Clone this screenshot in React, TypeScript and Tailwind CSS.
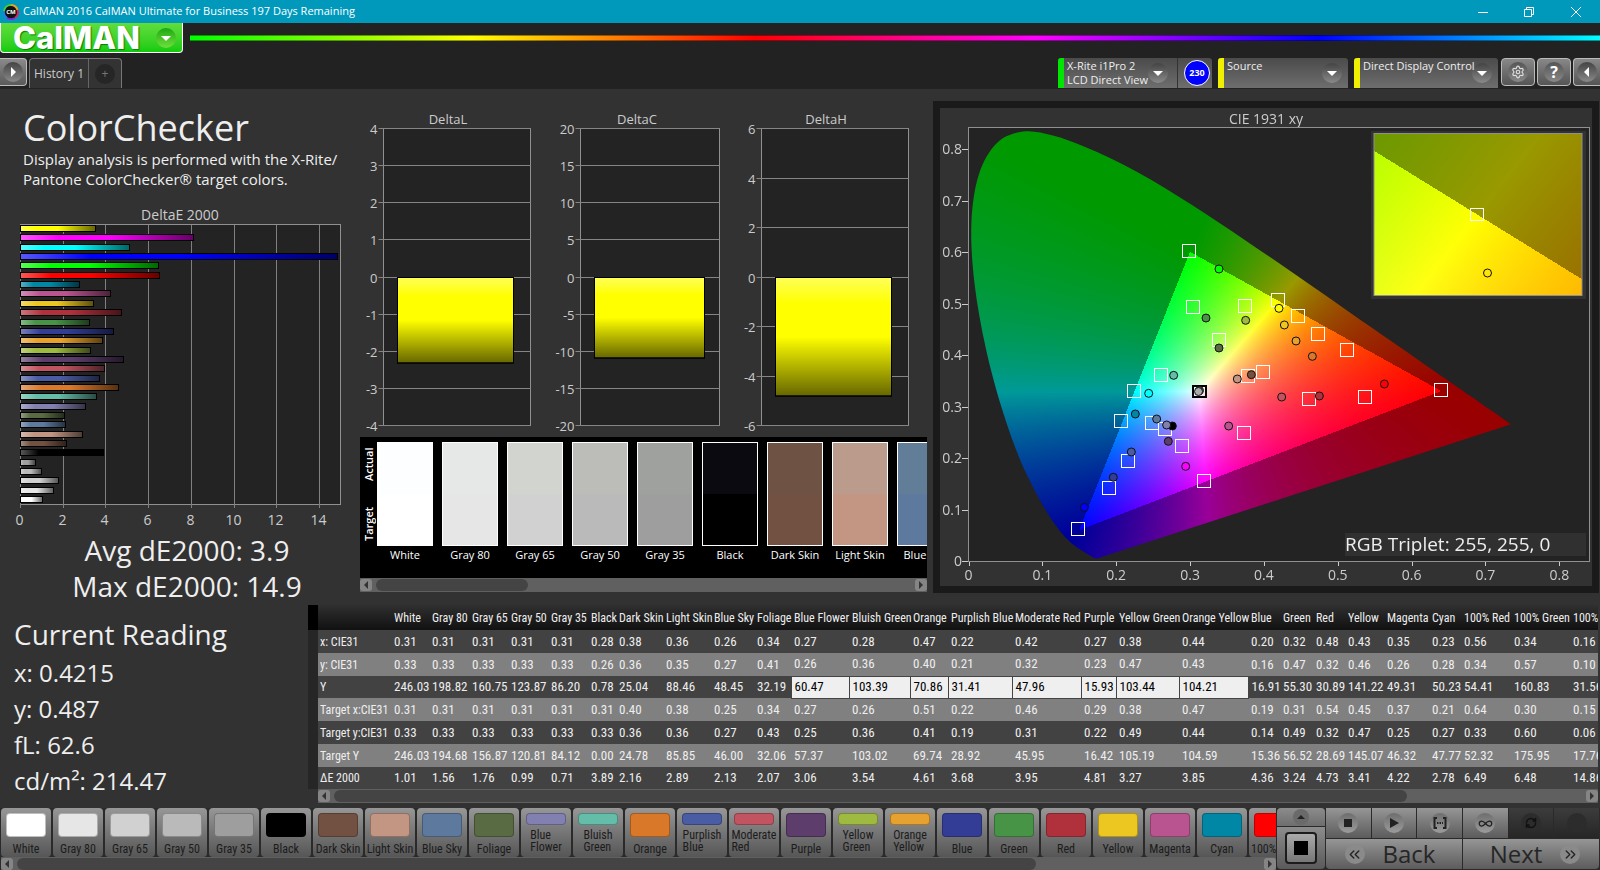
import React, { useLayoutEffect, useRef } from 'react';
import { ChevronsLeft, ChevronsRight, Settings, RefreshCw, Infinity as InfinityIcon } from 'lucide-react';

interface Patch {
  name: string;
  color: string;
  actual?: string;
  width: number;
  values: string[];
}

const ROW_LABELS = ['x: CIE31', 'y: CIE31', 'Y', 'Target x:CIE31', 'Target y:CIE31', 'Target Y', 'ΔE 2000'];

const PATCHES: Patch[] = [
  { name: 'White', color: '#ffffff', actual: '#fdfeff', width: 38, values: ['0.31', '0.33', '246.03', '0.31', '0.33', '246.03', '1.01'] },
  { name: 'Gray 80', color: '#e6e6e6', actual: '#e5e8e6', width: 40, values: ['0.31', '0.33', '198.82', '0.31', '0.33', '194.68', '1.56'] },
  { name: 'Gray 65', color: '#d1d1d1', actual: '#d2d4d0', width: 39, values: ['0.31', '0.33', '160.75', '0.31', '0.33', '156.87', '1.76'] },
  { name: 'Gray 50', color: '#bababa', actual: '#bcbcb9', width: 40, values: ['0.31', '0.33', '123.87', '0.31', '0.33', '120.81', '0.99'] },
  { name: 'Gray 35', color: '#9e9e9e', actual: '#9fa19f', width: 40, values: ['0.31', '0.33', '86.20', '0.31', '0.33', '84.12', '0.71'] },
  { name: 'Black', color: '#000000', actual: '#0a0a10', width: 28, values: ['0.28', '0.26', '0.78', '0.31', '0.33', '0.00', '3.89'] },
  { name: 'Dark Skin', color: '#735142', actual: '#6e5345', width: 47, values: ['0.38', '0.36', '25.04', '0.40', '0.36', '24.78', '2.16'] },
  { name: 'Light Skin', color: '#c29682', actual: '#bb9b8b', width: 48, values: ['0.36', '0.35', '88.46', '0.38', '0.36', '85.85', '2.89'] },
  { name: 'Blue Sky', color: '#5d7a9e', actual: '#627d97', width: 43, values: ['0.26', '0.27', '48.45', '0.25', '0.27', '46.00', '2.13'] },
  { name: 'Foliage', color: '#596b42', width: 37, values: ['0.34', '0.41', '32.19', '0.34', '0.43', '32.06', '2.07'] },
  { name: 'Blue Flower', color: '#8280b0', width: 58, values: ['0.27', '0.26', '60.47', '0.27', '0.25', '57.37', '3.06'] },
  { name: 'Bluish Green', color: '#63bda8', width: 61, values: ['0.28', '0.36', '103.39', '0.26', '0.36', '103.02', '3.54'] },
  { name: 'Orange', color: '#d97829', width: 38, values: ['0.47', '0.40', '70.86', '0.51', '0.41', '69.74', '4.61'] },
  { name: 'Purplish Blue', color: '#4a5ca3', width: 64, values: ['0.22', '0.21', '31.41', '0.22', '0.19', '28.92', '3.68'] },
  { name: 'Moderate Red', color: '#c25461', width: 69, values: ['0.42', '0.32', '47.96', '0.46', '0.31', '45.95', '3.95'] },
  { name: 'Purple', color: '#5c3d6b', width: 35, values: ['0.27', '0.23', '15.93', '0.29', '0.22', '16.42', '4.81'] },
  { name: 'Yellow Green', color: '#9eba40', width: 63, values: ['0.38', '0.47', '103.44', '0.38', '0.49', '105.19', '3.27'] },
  { name: 'Orange Yellow', color: '#e6a12e', width: 69, values: ['0.44', '0.43', '104.21', '0.47', '0.44', '104.59', '3.85'] },
  { name: 'Blue', color: '#333d96', width: 32, values: ['0.20', '0.16', '16.91', '0.19', '0.14', '15.36', '4.36'] },
  { name: 'Green', color: '#479447', width: 33, values: ['0.32', '0.47', '55.30', '0.31', '0.49', '56.52', '3.24'] },
  { name: 'Red', color: '#b0303b', width: 32, values: ['0.48', '0.32', '30.89', '0.54', '0.32', '28.69', '4.73'] },
  { name: 'Yellow', color: '#edc721', width: 39, values: ['0.43', '0.46', '141.22', '0.45', '0.47', '145.07', '3.41'] },
  { name: 'Magenta', color: '#ba5491', width: 45, values: ['0.35', '0.26', '49.31', '0.37', '0.25', '46.32', '4.22'] },
  { name: 'Cyan', color: '#0087a6', width: 32, values: ['0.23', '0.28', '50.23', '0.21', '0.27', '47.77', '2.78'] },
  { name: '100% Red', color: '#ff0000', width: 50, values: ['0.56', '0.34', '54.41', '0.64', '0.33', '52.32', '6.49'] },
  { name: '100% Green', color: '#00ff00', width: 59, values: ['0.34', '0.57', '160.83', '0.30', '0.60', '175.95', '6.48'] },
  { name: '100% Blue', color: '#0000ff', width: 60, values: ['0.16', '0.10', '31.56', '0.15', '0.06', '17.76', '14.86'] },
];

const TWO_LINE = ['Blue Flower', 'Bluish Green', 'Purplish Blue', 'Moderate Red', 'Yellow Green', 'Orange Yellow'];

// bottom to top
const DELTA_E = [
  ...PATCHES.map(p => ({ color: p.color, value: Number(p.values[6]) })),
  { color: '#00ffff', value: 5.1 },
  { color: '#ff00ff', value: 8.1 },
  { color: '#ffff00', value: 3.5 },
].reverse();

/* ---------- header ---------- */

const ArrowDot: React.FC<{ dir: 'down' | 'left' | 'right' | 'up'; green?: boolean }> = ({ dir, green }) => {
  const points = { down: '5,8 15,8 10,13', left: '12,5 12,15 7,10', right: '8,5 8,15 13,10', up: '5,12 15,12 10,7' }[dir];
  return (
    <span className={`flex size-5 shrink-0 items-center justify-center rounded-full ${green ? 'bg-linear-to-b from-[#12a812] to-[#6de03c]' : 'bg-linear-to-b from-[#444] to-[#8a8a8a]'}`}>
      <svg viewBox="0 0 20 20" className="size-5" fill="#fff"><polygon points={points} /></svg>
    </span>
  );
};

const TitleBar: React.FC = () => (
  <div className="flex h-[23px] items-center bg-[#0099bc] pl-[3px] text-white">
    <svg viewBox="0 0 16 16" className="size-4">
      <circle cx="8" cy="8" r="7" fill="#111" />
      <g fill="none" strokeWidth="2">
        <path d="M8 1A7 7 0 0 1 14.5 6" stroke="#f0a020" />
        <path d="M14.5 6A7 7 0 0 1 12 14" stroke="#e02060" />
        <path d="M12 14A7 7 0 0 1 4 14" stroke="#8030e0" />
        <path d="M4 14A7 7 0 0 1 1 7" stroke="#2080f0" />
        <path d="M1 7A7 7 0 0 1 8 1" stroke="#40d040" />
      </g>
      <text x="8" y="10" textAnchor="middle" fontSize="6" fontWeight="700" fill="#fff" className="font-['Open_Sans',sans-serif]">CM</text>
    </svg>
    <span className="ml-1 text-[11px]">CalMAN 2016 CalMAN Ultimate for Business 197 Days Remaining</span>
    <div className="ml-auto flex">
      <button aria-label="Minimize" className="flex h-[23px] w-[46px] items-center justify-center">
        <svg viewBox="0 0 12 12" className="size-3" stroke="#fff"><path d="M1 6.5H11" /></svg>
      </button>
      <button aria-label="Restore" className="flex h-[23px] w-[46px] items-center justify-center">
        <svg viewBox="0 0 12 12" className="size-3" stroke="#fff" fill="none"><path d="M1.5 3.5H8.5V10.5H1.5ZM3.5 3.5V1.5H10.5V8.5H8.5" /></svg>
      </button>
      <button aria-label="Close" className="flex h-[23px] w-[48px] items-center justify-center">
        <svg viewBox="0 0 12 12" className="size-3" stroke="#fff"><path d="M1 1L11 11M11 1L1 11" /></svg>
      </button>
    </div>
  </div>
);

const DeviceButton: React.FC<{ lines: string[]; bar: string; width: string; children?: React.ReactNode }> = ({ lines, bar, width, children }) => (
  <div className={`flex h-[30px] overflow-hidden rounded-t-[3px] bg-linear-to-b from-[#4b4b4b] to-[#6e6e6e] ${width}`}>
    <span className={`w-[6px] shrink-0 ${bar}`} />
    <button aria-haspopup="menu" className={`flex min-w-0 flex-1 items-start justify-between pl-[3px] text-left text-[11px] leading-[14px] text-[#eee] ${children ? 'pr-[9px]' : 'pr-1.5'}`}>
      <span className="relative z-10 min-w-0 pt-px whitespace-nowrap">{lines.map(l => <span key={l} className="block">{l}</span>)}</span>
      <span className="mt-[5px]"><ArrowDot dir="down" /></span>
    </button>
    {children}
  </div>
);

const Header: React.FC = () => (
  <header className="bg-[#222]">
    <div className="flex h-[35px] items-start">
      <button className="flex h-[30px] w-[183px] items-center justify-between rounded-b-[4px] border border-t-0 border-white bg-linear-to-b from-[#5fdd3d] to-[#0ccb0c] pr-1.5 pl-3 text-white">
        <span className="font-['Inter',sans-serif] text-[31px] leading-[28px] font-extrabold [text-shadow:1px_1px_1px_#0a7a0a]">CalMAN</span>
        <ArrowDot dir="down" green />
      </button>
      <div className="mt-3 ml-[7px] h-1.5 flex-1 border-y border-black/40 bg-[linear-gradient(to_right,#0f0,#ff0,#f00,#f0f,#00f,#0ff)]" />
    </div>
    <div className="flex h-[31px] items-start">
      <button aria-label="Show workflow" className="flex h-[28px] w-[27px] items-center justify-center rounded-r-[4px] border border-l-0 border-[#bbb] bg-linear-to-b from-[#8a8a8a] to-[#5a5a5a]">
        <ArrowDot dir="right" />
      </button>
      <div className="ml-0.5 flex h-[30px] rounded-t-[4px] border border-b-0 border-[#777] bg-[#333] text-[12px] text-[#ccc]">
        <button className="w-[59px] border-r border-[#666]">History 1</button>
        <button aria-label="Add history" className="flex w-[32px] items-center justify-center">
          <span className="flex size-5 items-center justify-center rounded-full bg-[#262626] text-[#777]">+</span>
        </button>
      </div>
      <div className="ml-auto flex">
        <DeviceButton lines={['X-Rite i1Pro 2', 'LCD Direct View']} bar="bg-[#00e600]" width="w-[154px]">
          <span className="flex w-[35px] items-center justify-end border-l border-[#333] pr-0.5">
            <span className="flex size-[26px] items-center justify-center rounded-full border border-white bg-[#0000ff] text-[9px] font-bold text-white">230</span>
          </span>
        </DeviceButton>
        <div className="w-[6px]" />
        <DeviceButton lines={['Source']} bar="bg-[#f0f000]" width="w-[130px]" />
        <div className="w-[6px]" />
        <DeviceButton lines={['Direct Display Control']} bar="bg-[#f0f000]" width="w-[144px]" />
        <div className="ml-[3px] flex gap-0.5">
          <button aria-label="Settings" className="flex h-[28px] w-[34px] items-center justify-center rounded-[4px] border border-[#bbb] bg-linear-to-b from-[#888] to-[#555]">
            <span className="flex size-5 items-center justify-center rounded-full bg-linear-to-b from-[#555] to-[#888]"><Settings size={14} color="#ddd" strokeWidth={2} /></span>
          </button>
          <button aria-label="Help" className="flex h-[28px] w-[34px] items-center justify-center rounded-[4px] border border-[#bbb] bg-linear-to-b from-[#888] to-[#555]">
            <span className="flex size-5 items-center justify-center rounded-full bg-linear-to-b from-[#555] to-[#888] text-[16px] font-bold text-white">?</span>
          </button>
          <button aria-label="Show panel" className="flex h-[28px] w-[27px] items-center justify-center rounded-l-[4px] border border-r-0 border-[#bbb] bg-linear-to-b from-[#888] to-[#555]">
            <ArrowDot dir="left" />
          </button>
        </div>
      </div>
    </div>
  </header>
);

/* ---------- charts ---------- */

const DeltaEChart: React.FC = () => (
  <svg viewBox="0 200 350 330" className="mt-[11px] h-[330px] w-[350px]" fontSize="14" fill="#ccc">
    <defs>
      <linearGradient id="shadeX">
        <stop offset="0" stopColor="#fff" stopOpacity=".35" />
        <stop offset=".22" stopColor="#fff" stopOpacity="0" />
        <stop offset=".5" stopColor="#000" stopOpacity="0" />
        <stop offset="1" stopColor="#000" stopOpacity=".6" />
      </linearGradient>
    </defs>
    <text x="180" y="220" textAnchor="middle">DeltaE 2000</text>
    <rect x="20.5" y="224.5" width="320" height="280" fill="#232323" stroke="#909090" />
    {[0, 2, 4, 6, 8, 10, 12, 14].map(v => {
      const x = Math.round(20 + v * 21.35) + 0.5;
      return (
        <g key={v}>
          <path d={`M${x} 225V508`} stroke="#808080" />
          <text x={x - 1} y="525" textAnchor="middle">{v}</text>
        </g>
      );
    })}
    {DELTA_E.map((bar, i) => {
      const y = Math.round(225 + i * 9.35) + 0.5;
      const w = Math.round(bar.value * 21.35);
      return (
        <g key={i} stroke="#000">
          <rect x="20.5" y={y} width={w} height="6" fill={bar.color} />
          <rect x="20.5" y={y} width={w} height="6" fill="url(#shadeX)" />
        </g>
      );
    })}
  </svg>
);

interface DeltaProps {
  title: string;
  left: number;
  right: number;
  titleX: number;
  max: number;
  step: number;
  value: number;
}

const DeltaPlot: React.FC<DeltaProps> = ({ title, left, right, titleX, max, step, value }) => {
  const ticks: number[] = [];
  for (let v = max; v >= -max; v -= step) ticks.push(v);
  const yOf = (v: number) => Math.round(276.5 - (v / max) * 148.5) + 0.5;
  const barW = Math.round((right - left) * 0.79);
  return (
    <g>
      <text x={titleX} y="124" textAnchor="middle">{title}</text>
      <rect x={left} y={128.5} width={right - left} height={297} fill="#232323" stroke="#909090" />
      {ticks.map(v => (
        <g key={v}>
          <path d={`M${left - 5} ${yOf(v)}H${right}`} stroke="#858585" />
          <text x={left - 6} y={yOf(v) + 5} textAnchor="end">{v}</text>
        </g>
      ))}
      <g stroke="#000">
        <rect x={left + 14} y="277.5" width={barW} height={yOf(value) - 277} fill="#ffff00" />
        <rect x={left + 14} y="277.5" width={barW} height={yOf(value) - 277} fill="url(#shadeY)" />
      </g>
    </g>
  );
};

const DeltaCharts: React.FC = () => (
  <svg viewBox="350 108 580 325" className="h-[325px] w-[580px]" fontSize="13" fill="#ccc">
    <defs>
      <linearGradient id="shadeY" x1="0" x2="0" y1="0" y2="1">
        <stop offset="0" stopColor="#fff" stopOpacity=".35" />
        <stop offset=".22" stopColor="#fff" stopOpacity="0" />
        <stop offset=".5" stopColor="#000" stopOpacity="0" />
        <stop offset="1" stopColor="#000" stopOpacity=".6" />
      </linearGradient>
    </defs>
    <DeltaPlot title="DeltaL" left={383.5} right={530.5} titleX={448} max={4} step={1} value={-2.3} />
    <DeltaPlot title="DeltaC" left={580.5} right={719.5} titleX={637} max={20} step={5} value={-10.9} />
    <DeltaPlot title="DeltaH" left={761.5} right={908.5} titleX={826} max={6} step={2} value={-4.8} />
  </svg>
);

/* spectral locus, 380 - 700nm */
const LOCUS: [number, number][] = [
  [0.1741, 0.005], [0.1733, 0.0048], [0.1714, 0.0051], [0.1689, 0.0069], [0.1644, 0.0109],
  [0.1611, 0.0138], [0.1566, 0.0177], [0.151, 0.0227], [0.144, 0.0297], [0.1355, 0.0399], [0.1241, 0.0578], [0.1096, 0.0868],
  [0.0913, 0.1327], [0.0687, 0.2007], [0.0454, 0.295], [0.0235, 0.4127], [0.0082, 0.5384], [0.0039, 0.6548], [0.0139, 0.7502],
  [0.0389, 0.812], [0.0743, 0.8338], [0.1142, 0.8262], [0.1547, 0.8059], [0.1929, 0.7816], [0.2296, 0.7543], [0.2658, 0.7243],
  [0.3016, 0.6923], [0.3373, 0.6589], [0.3731, 0.6245], [0.4087, 0.5896], [0.4441, 0.5547], [0.4788, 0.5202], [0.5125, 0.4866],
  [0.5448, 0.4544], [0.5752, 0.4242], [0.6029, 0.3965], [0.627, 0.3725], [0.6482, 0.3514], [0.6658, 0.334], [0.6801, 0.3197],
  [0.6915, 0.3083], [0.7079, 0.292], [0.719, 0.2809], [0.73, 0.27], [0.7347, 0.2653],
];

const TARGETS: [number, number][] = [
  [0.2986, 0.6019], [0.304, 0.4926], [0.3744, 0.4951], [0.3392, 0.4298], [0.2611, 0.3618], [0.2241, 0.3294], [0.2065, 0.2712],
  [0.2485, 0.2673], [0.2665, 0.2563], [0.2896, 0.2227], [0.216, 0.1935], [0.1907, 0.1411], [0.1483, 0.0621], [0.3193, 0.1553],
  [0.373, 0.2479], [0.3785, 0.3586], [0.3992, 0.367], [0.4191, 0.5068], [0.4466, 0.4764], [0.4733, 0.4414], [0.5125, 0.4091],
  [0.4611, 0.3139], [0.5369, 0.3178], [0.6398, 0.332],
];

const READINGS: [number, number, string][] = [
  [0.3392, 0.567, '#00ff00'], [0.3216, 0.4718, '#479447'], [0.3753, 0.4673, '#9eba40'], [0.3392, 0.4136, '#596b42'],
  [0.2778, 0.3605, '#63bda8'], [0.244, 0.3256, '#00ffff'], [0.2259, 0.2854, '#0087a6'], [0.2548, 0.2757, '#5d7a9e'],
  [0.276, 0.2621, '#000000'], [0.2683, 0.2641, '#8280b0'], [0.2706, 0.2324, '#5c3d6b'], [0.2205, 0.2117, '#4a5ca3'],
  [0.1961, 0.1625, '#333d96'], [0.1569, 0.1042, '#0000ff'], [0.2941, 0.1838, '#ff00ff'], [0.3523, 0.2621, '#ba5491'],
  [0.364, 0.3534, '#c29682'], [0.383, 0.3618, '#735142'], [0.4204, 0.4906, '#ffff00'], [0.4277, 0.4583, '#edc721'],
  [0.4435, 0.4272, '#e6a12e'], [0.4656, 0.3974, '#d97829'], [0.5631, 0.3437, '#ff0000'], [0.4241, 0.3184, '#c25461'],
  [0.4751, 0.3204, '#b0303b'],
];

// chart space
const CW = 652;
const CH = 478;
const toX = (x: number) => 28.5 + x * 738.5;
const toY = (y: number) => 453 - y * 515;

// full brightness inside the Rec.709 triangle, dimmed outside
const chromaColor = (x: number, y: number) => {
  const X = x / y;
  const Z = (1 - x - y) / y;
  const lin = [3.2406 * X - 1.5372 - 0.4986 * Z, -0.9689 * X + 1.8758 + 0.0415 * Z, 0.0557 * X - 0.204 + 1.057 * Z];
  const inside = lin.every(c => c >= -0.0005);
  const peak = Math.max(...lin);
  return lin.map(c => (255 * Math.max(c, 0) / peak) * (inside ? 1 : 0.6));
};

const paint = (w: number, h: number, at: (px: number, py: number) => [number, number]) => {
  const layer = document.createElement('canvas');
  layer.width = w;
  layer.height = h;
  const ctx = layer.getContext('2d')!;
  const img = ctx.createImageData(w, h);
  for (let j = 0; j < h; j++) {
    for (let i = 0; i < w; i++) {
      const [x, y] = at(i + 0.5, j + 0.5);
      const [r, g, b] = chromaColor(x, Math.max(y, 0.001));
      const k = (j * w + i) * 4;
      img.data[k] = r;
      img.data[k + 1] = g;
      img.data[k + 2] = b;
      img.data[k + 3] = 255;
    }
  }
  ctx.putImageData(img, 0, 0);
  return layer;
};

// smooth curve through the locus points, closed by the straight purple line
const traceLocus = (ctx: CanvasRenderingContext2D) => {
  const pts = LOCUS.map(([x, y]) => [toX(x), toY(y)]);
  const last = pts.length - 1;
  ctx.beginPath();
  ctx.moveTo(pts[0][0], pts[0][1]);
  for (let i = 0; i < last; i++) {
    const a = pts[Math.max(i - 1, 0)];
    const b = pts[i];
    const c = pts[i + 1];
    const d = pts[Math.min(i + 2, last)];
    ctx.bezierCurveTo(b[0] + (c[0] - a[0]) / 6, b[1] + (c[1] - a[1]) / 6, c[0] - (d[0] - b[0]) / 6, c[1] - (d[1] - b[1]) / 6, c[0], c[1]);
  }
  ctx.closePath();
};

const CieChart: React.FC = () => {
  const ref = useRef<HTMLCanvasElement>(null);

  useLayoutEffect(() => {
    const ctx = ref.current?.getContext('2d');
    if (!ctx) return;
    ctx.fillStyle = '#232323';
    ctx.fillRect(29, 20, 620, 433);

    const gamut = paint(CW, CH, (px, py) => [(px - 28.5) / 738.5, (453 - py) / 515]);
    ctx.save();
    traceLocus(ctx);
    ctx.clip();
    ctx.drawImage(gamut, 0, 0);
    ctx.restore();

    // magnified view around the active patch
    ctx.fillStyle = '#323232';
    ctx.fillRect(431, 23, 215, 168);
    ctx.drawImage(paint(208, 162, (px, py) => [0.4193 + (px - 103) / 4400, 0.5053 - (py - 81) / 3420]), 434, 26);
  }, []);

  return (
    <div className="relative bg-[#323232]">
      <canvas ref={ref} width={CW} height={CH} className="block h-auto w-full" />
      <svg viewBox={`0 0 ${CW} ${CH}`} className="absolute inset-0 size-full" fontSize="14" fill="#ccc" role="img" aria-label="CIE 1931 xy chromaticity">
        <text x="326" y="16" textAnchor="middle">CIE 1931 xy</text>
        <rect x="28.5" y="19.5" width="621" height="434" fill="none" stroke="#909090" />
        {[0, 1, 2, 3, 4, 5, 6, 7, 8].map(n => (
          <g key={n} stroke="none">
            <rect x={Math.round(toX(n / 10))} y="454" width="1" height="4" />
            <text x={toX(n / 10)} y="472" textAnchor="middle">{n / 10}</text>
            <rect x="22" y={Math.round(toY(n / 10))} width="6" height="1" />
            <text x="22" y={toY(n / 10) + 5} textAnchor="end">{n / 10}</text>
          </g>
        ))}
        <g fill="none" stroke="#fff">
          {TARGETS.map(([x, y], i) => (
            <rect key={i} x={Math.round(toX(x)) - 6.5} y={Math.round(toY(y)) - 6.5} width="13" height="13" />
          ))}
        </g>
        <rect x="253" y="278" width="13" height="11" fill="none" stroke="#000" strokeWidth="2" />
        <g stroke="#111">
          {READINGS.map(([x, y, c], i) => (
            <circle key={i} cx={toX(x)} cy={toY(y)} r="4" fill={c} />
          ))}
          <circle cx="259.5" cy="282.5" r="4" fill="#666" />
          <circle cx="258.5" cy="283.5" r="4" fill="#aaa" />
        </g>
        <rect x="434" y="25.5" width="208" height="162" fill="none" stroke="#909090" />
        <rect x="530.5" y="100.5" width="13" height="12" fill="none" stroke="#fff" />
        <circle cx="547.5" cy="165" r="4" fill="none" stroke="#111" />
        <rect x="405" y="425" width="241" height="23" fill="#303030" />
        <text x="405" y="443" fontSize="19" fill="#eee">RGB Triplet: 255, 255, 0</text>
      </svg>
    </div>
  );
};

/* ---------- shared bits ---------- */

const ScrollBar: React.FC<{ thumb: string; label: string }> = ({ thumb, label }) => (
  <div role="group" aria-label={label} className="flex h-[14px] items-center justify-between bg-[#606060]">
    <button aria-label="Scroll left" className="flex h-3 w-3 items-center justify-center rounded-[3px] bg-[#858585]">
      <svg viewBox="0 0 8 8" className="size-2" fill="#333"><polygon points="6,0 6,8 2,4" /></svg>
    </button>
    <div className="mx-1 h-3 flex-1">
      <div className={`h-3 rounded-full bg-[#444] ${thumb}`} />
    </div>
    <button aria-label="Scroll right" className="flex h-3 w-3 items-center justify-center rounded-[3px] bg-[#858585]">
      <svg viewBox="0 0 8 8" className="size-2" fill="#333"><polygon points="2,0 2,8 6,4" /></svg>
    </button>
  </div>
);

const SwatchStrip: React.FC = () => (
  <div className="mt-1 mr-[3px] ml-[10px]">
    <div className="flex h-[141px] overflow-hidden bg-black pt-[5px] text-[11px] text-white">
      <div className="flex h-[104px] w-[17px] shrink-0 rotate-180 flex-row-reverse justify-center">
        <div className="flex h-full items-center justify-between pt-[5px] pb-[5px] leading-4 font-semibold [writing-mode:vertical-rl]">
          <span>Target</span>
          <span>Actual</span>
        </div>
      </div>
      <div className="flex gap-[9px]">
        {PATCHES.slice(0, 9).map(p => (
          <div key={p.name} className="w-[56px] shrink-0 text-center">
            <div className="flex h-[104px] flex-col border border-white">
              <div className="flex-1" style={{ backgroundColor: p.actual }} />
              <div className="flex-1" style={{ backgroundColor: p.color }} />
            </div>
            <div className="leading-[18px] whitespace-nowrap">{p.name}</div>
          </div>
        ))}
      </div>
    </div>
    <ScrollBar thumb="w-[152px]" label="Swatch scroll" />
  </div>
);

const DataTable: React.FC = () => (
  <div className="mr-0.5 min-w-0 flex-1">
    <div className="overflow-hidden">
      <table className="w-[1322px] table-fixed border-collapse text-left font-['Roboto_Condensed','Open_Sans_Condensed',sans-serif] text-[13px] leading-4 whitespace-nowrap text-[#eee]">
        <thead>
          <tr className="h-[25px] bg-linear-to-b from-[#303030] to-[#111] text-[12px]">
            <th aria-label="Row marker" className="w-[10px] bg-black p-0" />
            <th aria-label="Quantity" className="w-[73px] p-0" />
            {PATCHES.map(p => (
              <th key={p.name} style={{ width: p.width }} className="p-0 pl-[3px] font-normal">{p.name}</th>
            ))}
          </tr>
        </thead>
        <tbody>
          {ROW_LABELS.map((label, row) => (
            <tr key={label} className={`${row % 2 ? 'bg-[#808080]' : 'bg-[#424242]'} ${row === 2 || row === 6 ? 'h-[22px]' : 'h-[23px]'}`}>
              <td className="bg-[#262626] p-0" />
              <th scope="row" className="p-0 pl-0.5 text-[12px] font-normal">{label}</th>
              {PATCHES.map((p, col) => (
                <td key={p.name} className={`p-0 pl-[3px] ${row === 2 && col > 9 && col < 18 ? 'border border-[#444] bg-[#efefef] text-black' : ''}`}>{p.values[row]}</td>
              ))}
            </tr>
          ))}
        </tbody>
      </table>
    </div>
    <div className="ml-[10px]"><ScrollBar thumb="w-[86%]" label="Table scroll" /></div>
  </div>
);

/* ---------- bottom bar ---------- */

const PatchBar: React.FC = () => (
  <div className="min-w-0 flex-1 pl-px">
    <div className="flex h-[49px] gap-0.5 overflow-hidden">
      {PATCHES.slice(0, 25).map(p => {
        const two = TWO_LINE.includes(p.name);
        return (
          <button key={p.name} className="flex h-[49px] w-[50px] shrink-0 flex-col items-center rounded-[4px] bg-linear-to-b from-[#979797] to-[#565656] pt-[5px]">
            <span className={`w-10 shrink-0 rounded-[4px] border border-black/25 ${two ? 'h-3' : 'h-6'}`} style={{ backgroundColor: p.color }} />
            <span className={`font-['Roboto_Condensed','Open_Sans_Condensed',sans-serif] text-[12px] leading-3 text-[#1c1c1c] ${two ? 'mt-1 w-min text-left' : 'mt-1.5 whitespace-nowrap'}`}>{p.name}</span>
          </button>
        );
      })}
    </div>
    <ScrollBar thumb="w-[82%]" label="Patch scroll" />
  </div>
);

const TransportButton: React.FC<{ label: string; dark?: boolean; children?: React.ReactNode }> = ({ label, dark, children }) => (
  <button aria-label={label} disabled={dark} className={`flex h-[30px] flex-1 items-center justify-center ${dark ? 'bg-linear-to-b from-[#3c3c3c] to-[#262626]' : 'bg-linear-to-b from-[#969696] to-[#5c5c5c]'}`}>
    <span className={`flex size-5 items-center justify-center rounded-full ${dark ? 'bg-[#2c2c2c]' : 'bg-linear-to-b from-[#6e6e6e] to-[#9c9c9c]'}`}>{children}</span>
  </button>
);

const Transport: React.FC = () => (
  <div className="flex shrink-0 gap-px pr-px pl-px">
    <div className="flex w-[48px] flex-col gap-px">
      <button aria-label="Expand" className="flex h-[18px] items-center justify-center rounded-t-[4px] bg-linear-to-b from-[#8c8c8c] to-[#6e6e6e]">
        <span className="flex size-4 items-center justify-center rounded-full bg-[#6a6a6a]">
          <svg viewBox="0 0 8 8" className="size-2" fill="#222"><polygon points="0,6 8,6 4,2" /></svg>
        </span>
      </button>
      <button aria-label="Pattern window" className="flex h-[42px] items-center justify-center rounded-b-[4px] bg-linear-to-b from-[#8c8c8c] to-[#5a5a5a]">
        <span className="flex size-8 items-center justify-center rounded-[4px] border-2 border-[#1c1c1c] bg-linear-to-b from-[#aaa] to-[#777]">
          <span className="size-3.5 bg-black" />
        </span>
      </button>
    </div>
    <div className="flex w-[273px] flex-col gap-px">
      <div className="flex gap-px">
        <TransportButton label="Stop"><span className="size-2 bg-[#222]" /></TransportButton>
        <TransportButton label="Play"><svg viewBox="0 0 10 10" className="size-2.5" fill="#222"><polygon points="1,0 10,5 1,10" /></svg></TransportButton>
        <TransportButton label="Read series">
          <svg viewBox="0 0 14 12" className="h-3 w-3.5" fill="none" stroke="#222" strokeWidth="2"><path d="M4 1H1.5V11H4M10 1H12.5V11H10" /><path d="M4 6H10" strokeDasharray="1.5 1" /></svg>
        </TransportButton>
        <TransportButton label="Read continuous"><InfinityIcon size={15} color="#222" /></TransportButton>
        <TransportButton label="Refresh" dark><RefreshCw size={12} color="#111" strokeWidth={3} /></TransportButton>
        <TransportButton label="Unused" dark />
      </div>
      <div className="flex gap-px text-[24px] leading-[30px] text-[#262626]">
        <button className="flex h-[30px] flex-1 items-center justify-center gap-[18px] rounded-bl-[4px] bg-linear-to-b from-[#969696] to-[#5c5c5c] pr-2">
          <span className="flex size-5 items-center justify-center rounded-full bg-[#8a8a8a]"><ChevronsLeft size={17} /></span>
          Back
        </button>
        <button className="flex h-[30px] flex-1 items-center justify-center gap-[18px] rounded-br-[4px] bg-linear-to-b from-[#969696] to-[#5c5c5c] pl-2">
          Next
          <span className="flex size-5 items-center justify-center rounded-full bg-[#8a8a8a]"><ChevronsRight size={17} /></span>
        </button>
      </div>
    </div>
  </div>
);

const App: React.FC = () => (
  <div className="overflow-hidden bg-[#323232] font-['Open_Sans',sans-serif]">
    <TitleBar />
    <Header />
    <main>
      <div className="flex">
        <section className="w-[350px] shrink-0 pt-[19px] text-[#eee]">
          <h1 className="pl-[23px] text-[36px] leading-10">ColorChecker</h1>
          <p className="mt-px pl-[23px] text-[15px] leading-5 whitespace-nowrap">Display analysis is performed with the X-Rite/<br />Pantone ColorChecker® target colors.</p>
          <DeltaEChart />
          <div className="mt-0.5 pl-6 text-center text-[28px] leading-9">
            <p>Avg dE2000: 3.9</p>
            <p>Max dE2000: 14.9</p>
          </div>
        </section>
        <section className="w-[580px] shrink-0 pt-[19px]">
          <DeltaCharts />
          <SwatchStrip />
        </section>
        <section className="mt-3 mr-px ml-[3px] min-w-0 flex-1 self-start border-[7px] border-[#1a1a1a]">
          <CieChart />
        </section>
      </div>
      <div className="mt-px flex pb-[5px]">
        <section className="w-[308px] shrink-0 pt-[11px] pl-[14px] text-[#eee]">
          <h2 className="text-[28px] leading-9">Current Reading</h2>
          <div className="mt-[3px] text-[24px] leading-9">
            <p>x: 0.4215</p>
            <p>y: 0.487</p>
            <p>fL: 62.6</p>
            <p>cd/m²: 214.47</p>
          </div>
        </section>
        <DataTable />
      </div>
    </main>
    <footer className="flex h-[62px] bg-[#2a2a2a]">
      <PatchBar />
      <Transport />
    </footer>
  </div>
);

export default App;
